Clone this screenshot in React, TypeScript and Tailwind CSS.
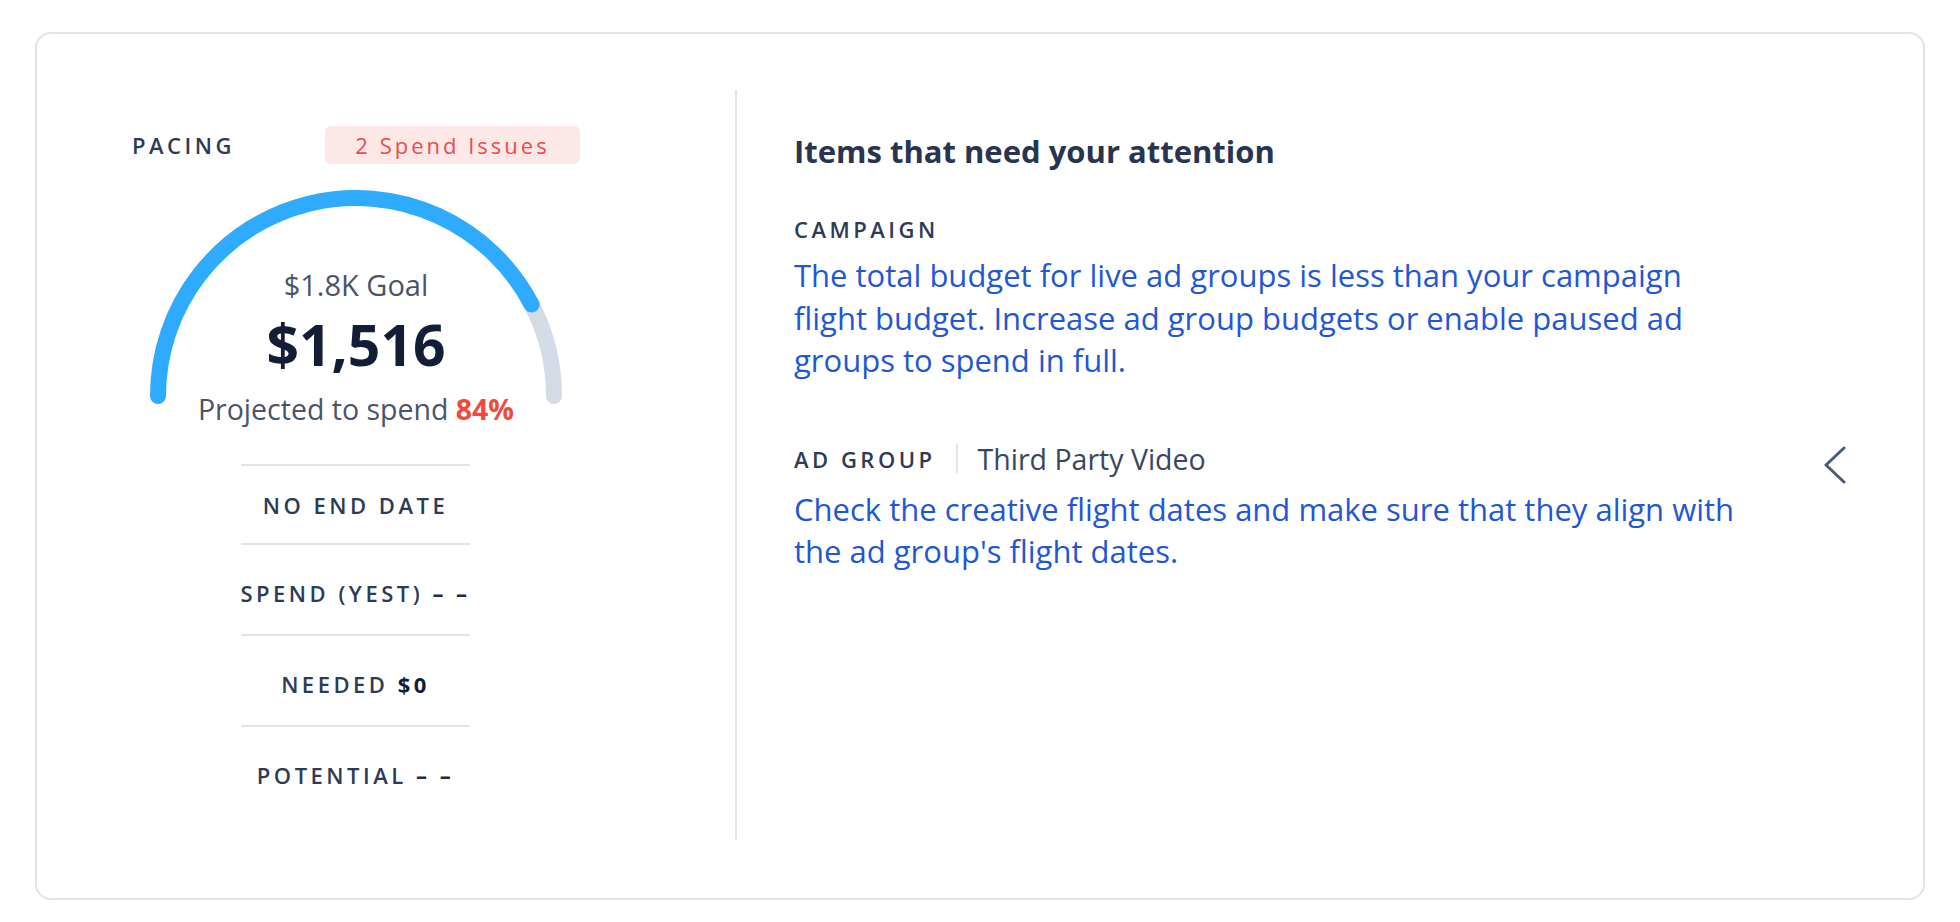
import React from "react";

const font = { fontFamily: '"Open Sans", "Noto Sans", sans-serif' };

function Gauge() {
  // center (224, 210), r = 198, semicircle; 84% blue
  const cx = 224;
  const cy = 210;
  const r = 198;
  const pct = 0.847;
  const ang = Math.PI * (1 - pct);
  const ex = cx + r * Math.cos(ang);
  const ey = cy - r * Math.sin(ang);
  return (
    <svg width="448" height="230" viewBox="0 0 448 230" className="absolute left-0 top-0">
      <path
        d={`M ${ex} ${ey} A ${r} ${r} 0 0 1 ${cx + r} ${cy}`}
        fill="none"
        stroke="#d5dbe6"
        strokeWidth="16"
        strokeLinecap="round"
      />
      <path
        d={`M ${cx - r} ${cy} A ${r} ${r} 0 0 1 ${ex} ${ey}`}
        fill="none"
        stroke="#2eaafe"
        strokeWidth="16"
        strokeLinecap="round"
      />
    </svg>
  );
}

function Row({ children, first }: { children: React.ReactNode; first?: boolean }) {
  return (
    <div
      className={
        first
          ? "h-[79px] border-t-2 border-[#dfe3eb] flex items-center justify-center"
          : "h-[91px] pt-[7px] border-t-2 border-[#dfe3eb] flex items-center justify-center"
      }
    >
      <span className="whitespace-nowrap text-[22px] leading-[30px] font-semibold tracking-[3.5px] text-[#2f3b55]">
        {children}
      </span>
    </div>
  );
}

export default function App() {
  return (
    <div className="w-[1960px] h-[922px] bg-white pt-[32px] pl-[35px]" style={font}>
      <div className="w-[1890px] h-[868px] border-2 border-[#dfe3ec] rounded-[16px] flex bg-white">
        {/* Left column */}
        <div className="ml-[95px] w-[448px] pt-[92px] flex flex-col">
          <div className="h-[38px] flex items-center justify-between">
            <span className="text-[22px] leading-[30px] font-semibold tracking-[3.5px] text-[#2f3b55]">
              PACING
            </span>
            <span className="w-[255px] h-[38px] rounded-[6px] bg-[#fde8e8] flex items-center justify-center text-[22px] tracking-[3px] text-[#ef4a4a]">
              2 Spend Issues
            </span>
          </div>
          <div className="relative mt-[22px] h-[244px] flex flex-col items-center">
            <Gauge />
            <div className="relative mt-[81px] text-[29px] leading-[36px] text-[#4a5568]">$1.8K Goal</div>
            <div className="relative mt-[9px] text-[57px] leading-[64px] font-bold text-[#131d35]">$1,516</div>
            <div className="relative mt-[13px] text-[28.5px] leading-[40px] text-[#4a5568] whitespace-nowrap">
              Projected to spend <span className="font-bold text-[#f04a3e]">84%</span>
            </div>
          </div>
          <div className="mt-[34px] w-[229px] ml-[109px] flex flex-col">
            <Row first>NO END DATE</Row>
            <Row>
              SPEND (YEST) <span className="font-bold text-[#1f2a44]">– –</span>
            </Row>
            <Row>
              NEEDED <span className="font-bold text-[#131d35]">$0</span>
            </Row>
            <Row>
              POTENTIAL <span className="font-bold text-[#1f2a44]">– –</span>
            </Row>
          </div>
        </div>

        {/* Divider */}
        <div className="ml-[155px] mt-[56px] mb-[58px] w-[2px] bg-[#dfe3eb]" />

        {/* Right column */}
        <div className="flex-1 pl-[57px] pr-[76px] pt-[99px] flex flex-col">
          <div className="text-[31px] leading-[36px] font-bold text-[#283450] whitespace-nowrap">
            Items that need your attention
          </div>
          <div className="mt-[45px] text-[22px] leading-[30px] font-semibold tracking-[3.5px] text-[#2f3b55]">
            CAMPAIGN
          </div>
          <p className="mt-[10px] text-[31px] leading-[42.5px] text-[#1f57d6] whitespace-nowrap">
            The total budget for live ad groups is less than your campaign
            <br />
            flight budget. Increase ad group budgets or enable paused ad
            <br />
            groups to spend in full.
          </p>
          <div className="mt-[57px] h-[40px] flex items-center justify-between">
            <div className="flex items-center">
              <span className="text-[22px] leading-[30px] font-semibold tracking-[3.5px] text-[#2f3b55]">
                AD GROUP
              </span>
              <span className="ml-[20px] w-[2px] h-[29px] bg-[#dfe3eb]" />
              <span className="ml-[20px] text-[28.5px] leading-[36px] text-[#3a4660] whitespace-nowrap">
                Third Party Video
              </span>
            </div>
            <svg width="24" height="38" viewBox="0 0 24 38" className="mt-[12px]">
              <polyline
                points="21,2 3,19 21,36"
                fill="none"
                stroke="#4a5a7a"
                strokeWidth="3"
                strokeLinecap="round"
                strokeLinejoin="round"
              />
            </svg>
          </div>
          <p className="mt-[9px] text-[31px] leading-[42.5px] text-[#1f57d6] whitespace-nowrap">
            Check the creative flight dates and make sure that they align with
            <br />
            the ad group's flight dates.
          </p>
        </div>
      </div>
    </div>
  );
}
